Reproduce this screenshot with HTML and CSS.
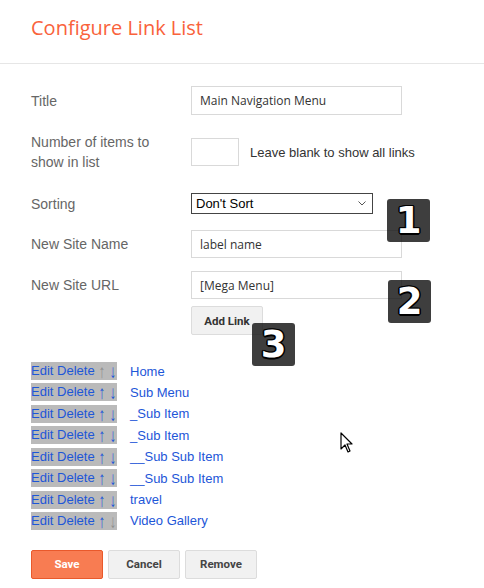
FILE: index.html
```html
<!DOCTYPE html>
<html>
<head>
<meta charset="utf-8">
<link rel="stylesheet" href="styles.css">
</head>
<body>
<div class="page">
  <header class="head"><h1 class="title">Configure Link List</h1></header>
  <div class="form">
    <div class="row r-title">
      <label class="lbl">Title</label>
      <input class="txt wide" type="text" value="Main Navigation Menu">
    </div>
    <div class="row r-num">
      <label class="lbl">Number of items to<br>show in list</label>
      <input class="txt num" type="text" value="">
      <span class="hint">Leave blank to show all links</span>
    </div>
    <div class="row r-sort">
      <label class="lbl">Sorting</label>
      <div class="selwrap">
        <select class="sel"><option>Don't Sort</option></select>
        <svg class="chev" width="8" height="5" viewBox="0 0 8 5"><path d="M0.5 0.5 L4 4 L7.5 0.5" fill="none" stroke="#555" stroke-width="1"/></svg>
      </div>
    </div>
    <div class="row r-name">
      <label class="lbl">New Site Name</label>
      <input class="txt wide" type="text" value="label name">
    </div>
    <div class="row r-url">
      <label class="lbl">New Site URL</label>
      <input class="txt wide" type="text" value="[Mega Menu]">
    </div>
    <div class="row r-add">
      <button class="btn add">Add Link</button>
    </div>
    <ul class="links">
      <li><span class="ctl"><a>Edit</a> <a>Delete</a><span class="ar up dis">↑</span><a class="ar dn">↓</a></span><a class="name">Home</a></li>
      <li><span class="ctl"><a>Edit</a> <a>Delete</a><a class="ar up">↑</a><a class="ar dn">↓</a></span><a class="name">Sub Menu</a></li>
      <li><span class="ctl"><a>Edit</a> <a>Delete</a><a class="ar up">↑</a><a class="ar dn">↓</a></span><a class="name">_Sub Item</a></li>
      <li><span class="ctl"><a>Edit</a> <a>Delete</a><a class="ar up">↑</a><a class="ar dn">↓</a></span><a class="name">_Sub Item</a></li>
      <li><span class="ctl"><a>Edit</a> <a>Delete</a><a class="ar up">↑</a><a class="ar dn">↓</a></span><a class="name">__Sub Sub Item</a></li>
      <li><span class="ctl"><a>Edit</a> <a>Delete</a><a class="ar up">↑</a><a class="ar dn">↓</a></span><a class="name">__Sub Sub Item</a></li>
      <li><span class="ctl"><a>Edit</a> <a>Delete</a><a class="ar up">↑</a><a class="ar dn">↓</a></span><a class="name">travel</a></li>
      <li><span class="ctl"><a>Edit</a> <a>Delete</a><a class="ar up">↑</a><span class="ar dn dis">↓</span></span><a class="name">Video Gallery</a></li>
    </ul>
    <div class="actions">
      <button class="btn save">Save</button>
      <button class="btn">Cancel</button>
      <button class="btn">Remove</button>
    </div>
  </div>
  <div class="badge b1">1</div>
  <div class="badge b2">2</div>
  <div class="badge b3">3</div>
  <svg class="cursor" width="14" height="22" viewBox="0 0 14 22">
    <path d="M1 1 L1 17 L5 13 L8 20 L10 19 L7 12 L12 12 Z" fill="#fff" stroke="#000" stroke-width="1.2" stroke-linejoin="round"/>
  </svg>
</div>
</body>
</html>
```
FILE: styles.css
```css
html, body {
  margin: 0;
  padding: 0;
  background: #fff;
}
.page {
  position: relative;
  width: 484px;
  height: 588px;
  font-family: "Liberation Sans", Arial, sans-serif;
  font-size: 13px;
  color: #333;
}
.head {
  border-bottom: 1px solid #e6e6e6;
  padding-left: 31px;
  box-sizing: border-box;
  height: 64px;
}
.title {
  margin: 0;
  padding-top: 14px;
  font-family: "Open Sans", sans-serif;
  font-weight: 400;
  font-size: 20px;
  color: #f9623b;
  line-height: 28px;
}
.form {
  padding-left: 31px;
}
.row {
  display: flex;
  align-items: center;
}
.lbl {
  width: 160px;
  flex: none;
  color: #666;
  font-size: 14px;
  line-height: 20px;
}
.txt {
  box-sizing: border-box;
  height: 29px;
  border: 1px solid #d9d9d9;
  padding: 0 8px;
  font-family: "Open Sans", sans-serif;
  font-size: 12px;
  color: #333;
  margin: 0;
  outline: none;
}
.wide { width: 211px; }
.num { width: 48px; height: 28px; }
.hint { margin-left: 11px; color: #333; }
.r-title { margin-top: 22px; height: 29px; }
.r-num { margin-top: 17px; height: 40px; }
.r-sort { margin-top: 21px; height: 21px; }
.r-name { margin-top: 16px; height: 28px; }
.r-url { margin-top: 13px; height: 28px; }
.r-add { margin-top: 7px; padding-left: 160px; height: 29px; }
.r-name .txt, .r-url .txt { height: 28px; }
.selwrap {
  position: relative;
  width: 182px;
  height: 21px;
}
.sel {
  -webkit-appearance: none;
  appearance: none;
  box-sizing: border-box;
  width: 182px;
  height: 21px;
  margin: 0;
  border: 1px solid #444;
  border-radius: 0;
  background: #fff;
  padding: 0 4px;
  font-family: "Liberation Sans", Arial, sans-serif;
  font-size: 13px;
  color: #000;
}
.chev {
  position: absolute;
  right: 7px;
  top: 8px;
}
.btn {
  box-sizing: border-box;
  height: 29px;
  width: 72px;
  margin: 0;
  border: 1px solid #dcdcdc;
  border-radius: 2px;
  background: #f1f1f1;
  font-family: Roboto, "Liberation Sans", sans-serif;
  font-weight: 700;
  font-size: 11.5px;
  color: #444;
  padding: 0;
}
.add { width: 72px; color: #333; }
.links {
  list-style: none;
  margin: 27px 0 0 0;
  padding: 0;
  display: flex;
  flex-direction: column;
  gap: 3.43px;
}
.links li {
  display: flex;
  align-items: center;
  height: 18px;
}
.links a { color: #1d56d8; }
.ctl {
  display: inline-block;
  background: #bababa;
  height: 18px;
  line-height: 18px;
  width: 86px;
  white-space: nowrap;
}
.ar {
  display: inline-block;
  width: 6px;
  text-align: center;
  font-family: "Liberation Sans", Arial, sans-serif;
  font-size: 14px;
  line-height: 18px;
  vertical-align: top;
  transform: scaleY(1.35);
}
.up { margin-left: 4px; }
.dn { margin-left: 5px; }
.dis { color: #8f8f8f; }
.name { margin-left: 13px; }
.actions {
  margin-top: 20px;
  display: flex;
  gap: 5px;
}
.save {
  background: #f87c52;
  border-color: #e9592b;
  color: #fff;
  width: 72px;
}
.badge {
  position: absolute;
  width: 43px;
  height: 43px;
  border-radius: 3px;
  background: rgba(20, 20, 20, 0.82);
  color: #fff;
  font-family: "DejaVu Sans", sans-serif;
  font-weight: 700;
  font-size: 37px;
  line-height: 43px;
  text-align: center;
  text-shadow: -1px -1px 0 #000, 1px -1px 0 #000, -1px 1px 0 #000, 1px 1px 0 #000, 0 1.5px 0 #000, 0 -1.5px 0 #000, 1.5px 0 0 #000, -1.5px 0 0 #000;
}
.b1 { left: 387px; top: 199px; }
.b2 { left: 388px; top: 280px; }
.b3 { left: 252px; top: 323px; }
.cursor {
  position: absolute;
  left: 340px;
  top: 432px;
}
```
